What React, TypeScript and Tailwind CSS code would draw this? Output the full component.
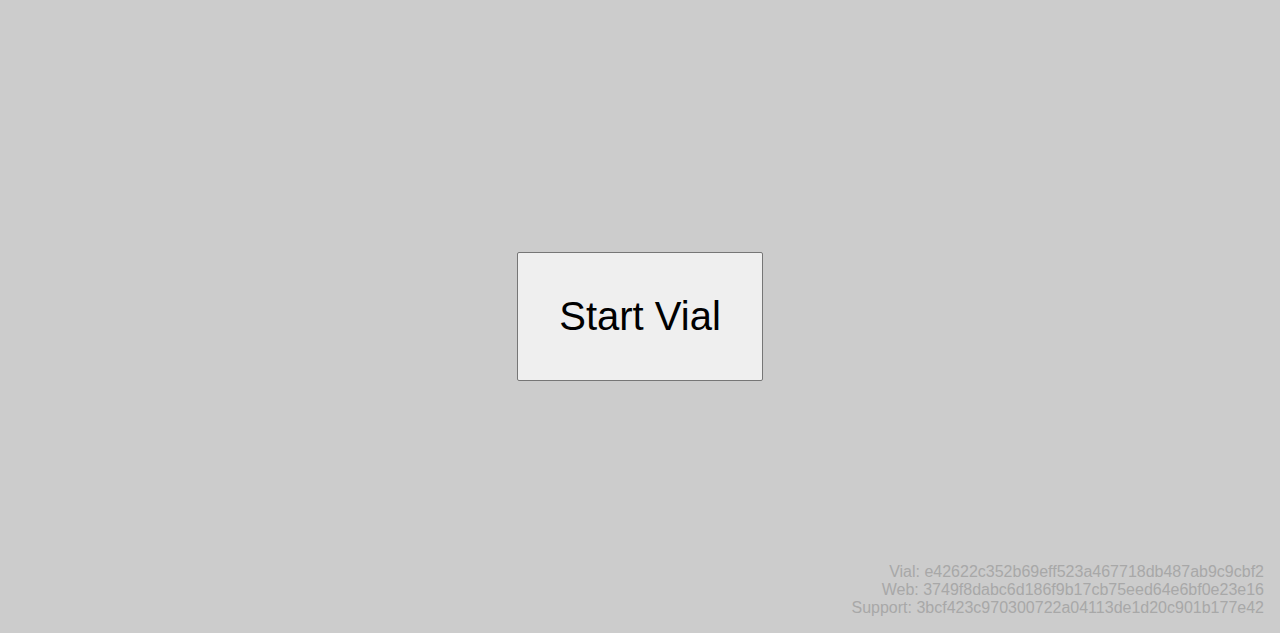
export default function App() {
  return (
    <div className="relative flex h-[633px] w-full items-center justify-center bg-[#cccccc] font-['Liberation_Sans',Arial,sans-serif]">
      <button className="h-[129px] w-[246px] rounded-[2px] border border-[#767676] bg-[#efefef] pb-[2px] text-[40px] leading-[46px] text-black">
        Start Vial
      </button>
      <div className="absolute bottom-[16px] right-[16px] text-right text-[16px] leading-[18px] text-[#a8a8a8]">
        <div>Vial: e42622c352b69eff523a467718db487ab9c9cbf2</div>
        <div>Web: 3749f8dabc6d186f9b17cb75eed64e6bf0e23e16</div>
        <div>Support: 3bcf423c970300722a04113de1d20c901b177e42</div>
      </div>
    </div>
  )
}
